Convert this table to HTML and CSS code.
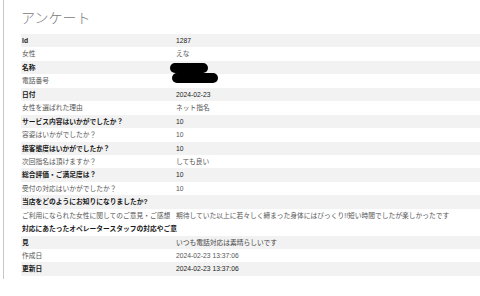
FILE: index.html
```html
<!DOCTYPE html>
<html lang="ja">
<head>
<meta charset="utf-8">
<title>アンケート</title>
<link rel="stylesheet" href="styles.css">
</head>
<body>
<div class="page">
  <h1 class="title">アンケート</h1>
  <div class="list">
    <div class="row"><div class="label">Id</div><div class="value">1287</div></div>
    <div class="row"><div class="label">女性</div><div class="value">えな</div></div>
    <div class="row"><div class="label">名称</div><div class="value"><span class="redact redact-a"></span></div></div>
    <div class="row"><div class="label">電話番号</div><div class="value"><span class="redact redact-b"></span></div></div>
    <div class="row"><div class="label">日付</div><div class="value">2024-02-23</div></div>
    <div class="row"><div class="label">女性を選ばれた理由</div><div class="value">ネット指名</div></div>
    <div class="row"><div class="label">サービス内容はいかがでしたか？</div><div class="value">10</div></div>
    <div class="row"><div class="label">容姿はいかがでしたか？</div><div class="value">10</div></div>
    <div class="row"><div class="label">接客態度はいかがでしたか？</div><div class="value">10</div></div>
    <div class="row"><div class="label">次回指名は頂けますか？</div><div class="value">しても良い</div></div>
    <div class="row"><div class="label">総合評価・ご満足度は？</div><div class="value">10</div></div>
    <div class="row"><div class="label">受付の対応はいかがでしたか？</div><div class="value">10</div></div>
    <div class="row"><div class="label">当店をどのようにお知りになりましたか?</div><div class="value"></div></div>
    <div class="row"><div class="label">ご利用になられた女性に関してのご意見・ご感想</div><div class="value">期待していた以上に若々しく締まった身体にはびっくり!!短い時間でしたが楽しかったです</div></div>
    <div class="row row-tall"><div class="label label-wrap">対応にあたったオペレータースタッフの対応やご意見</div><div class="value value-end">いつも電話対応は素晴らしいです</div></div>
    <div class="row"><div class="label">作成日</div><div class="value">2024-02-23 13:37:06</div></div>
    <div class="row"><div class="label">更新日</div><div class="value">2024-02-23 13:37:06</div></div>
  </div>
</div>
</body>
</html>
```

FILE: styles.css
```css
html, body {
  margin: 0;
  padding: 0;
  background: #fff;
}

body {
  font-family: "Liberation Sans", "Noto Sans CJK JP", sans-serif;
  color: #333;
}

.page {
  margin-left: 3px;
  border-left: 1px solid #c8c8c8;
  padding: 0 0 3px 17px;
}

.title {
  margin: 0;
  padding: 6px 0 6px 0;
  height: 22px;
  line-height: 22px;
  font-family: "Noto Sans CJK JP", sans-serif;
  font-size: 14px;
  font-weight: 300;
  color: #7a7a7a;
}

.list {
  display: flex;
  flex-direction: column;
}

.row {
  display: grid;
  grid-template-columns: 155px 1fr;
  line-height: 13.44px;
  font-size: 6.75px;
  color: #555;
  white-space: nowrap;
}

.row:nth-child(odd) {
  background: #f2f2f2;
  color: #1a1a1a;
}

.row:nth-child(odd) .label {
  font-weight: bold;
}

.label {
  padding-left: 1px;
}

.value {
  position: relative;
}

.row.row-tall {
  background: linear-gradient(to bottom, #fff 50%, #f2f2f2 50%);
}

.label-wrap {
  white-space: normal;
  width: 158px;
}

.value-end {
  align-self: end;
  color: #444;
}

.redact {
  position: absolute;
  background: #000;
  border-radius: 5px;
  height: 10px;
}

.redact-a {
  left: -6px;
  top: 2px;
  width: 38px;
}

.redact-b {
  left: -4px;
  top: -1px;
  width: 46px;
}
```
